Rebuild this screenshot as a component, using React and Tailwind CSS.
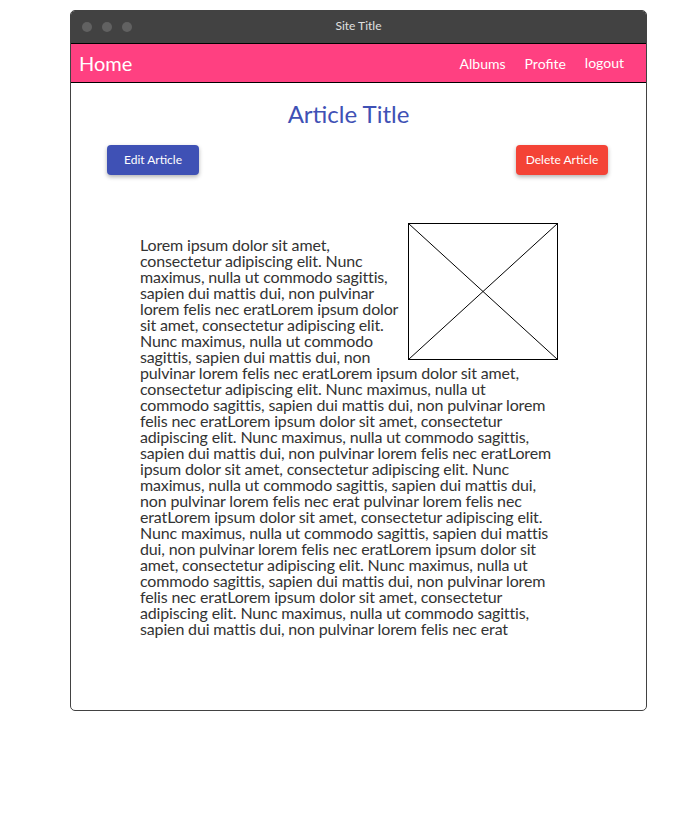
const S =
  'Lorem ipsum dolor sit amet, consectetur adipiscing elit. Nunc maximus, nulla ut commodo sagittis, sapien dui mattis dui, non pulvinar lorem felis nec erat';

const BODY = S + S + S + S + S + ' pulvinar lorem felis nec erat' + S + S + S;

function Placeholder() {
  return (
    <svg
      className="float-right block"
      width="150"
      height="137"
      viewBox="0 0 150 137"
    >
      <rect x="0.5" y="0.5" width="149" height="136" fill="white" stroke="black" />
      <line x1="0.5" y1="0.5" x2="149.5" y2="136.5" stroke="black" strokeWidth="1" />
      <line x1="149.5" y1="0.5" x2="0.5" y2="136.5" stroke="black" strokeWidth="1" />
    </svg>
  );
}

export default function App() {
  return (
    <div
      className="w-[696px] h-[820px] bg-white pt-[10px] pl-[70px]"
      style={{ fontFamily: 'Lato, "Noto Sans", sans-serif' }}
    >
      {/* Window */}
      <div className="w-[577px] h-[701px] border border-[#424242] rounded-[5px] overflow-hidden flex flex-col">
        {/* Title bar */}
        <div className="h-[32px] bg-[#424242] flex items-center relative">
          <div className="flex gap-[10px] pl-[11px]">
            <span className="w-[10px] h-[10px] rounded-full bg-[#616161]" />
            <span className="w-[10px] h-[10px] rounded-full bg-[#616161]" />
            <span className="w-[10px] h-[10px] rounded-full bg-[#616161]" />
          </div>
          <div className="absolute inset-0 flex items-center justify-center text-[12px] text-[#e0e0e0] -mt-[2px]">
            Site Title
          </div>
        </div>

        {/* Nav */}
        <div className="h-[40px] bg-[#ff4081] border-y border-black flex items-center px-[8px] text-white">
          <span className="text-[20px] leading-none -mt-[1px]">Home</span>
          <div className="ml-auto flex items-center text-[14px] gap-[19px] pr-[14px]">
            <span>Albums</span>
            <span>Profite</span>
            <span className="-mt-[2px]">logout</span>
          </div>
        </div>

        {/* Content */}
        <div className="flex-1">
          <h1 className="text-center text-[24px] leading-none text-[#3f51b5] mt-[19px] pr-[20px]">
            Article Title
          </h1>

          <div className="flex justify-between px-[36px] pr-[38px] mt-[19px]">
            <button className="w-[92px] h-[30px] rounded-[4px] bg-[#3f51b5] text-white text-[12px] shadow-[0_2px_4px_rgba(0,0,0,0.3)]">
              Edit Article
            </button>
            <button className="w-[92px] h-[30px] rounded-[4px] bg-[#f44336] text-white text-[12px] shadow-[0_2px_4px_rgba(0,0,0,0.3)]">
              Delete Article
            </button>
          </div>

          <div className="ml-[69px] w-[418px] mt-[48px]">
            <Placeholder />
            <p className="pt-[14px] text-[16px] leading-[16px] tracking-[-0.15px] text-[#333333]">{BODY}</p>
          </div>
        </div>
      </div>
    </div>
  );
}
